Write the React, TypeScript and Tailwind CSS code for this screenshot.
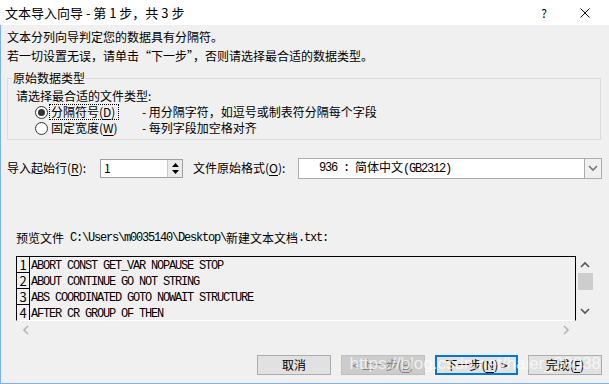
import { ReactNode } from 'react';

const cjk = 'font-["Noto_Sans_CJK_SC",sans-serif]';
const mono = 'font-["Liberation_Mono","Noto_Sans_CJK_SC",monospace] text-[12px] tracking-[-1.2px]';

const previewLines = [
  'ABORT CONST GET_VAR NOPAUSE STOP',
  'ABOUT CONTINUE GO NOT STRING',
  'ABS COORDINATED GOTO NOWAIT STRUCTURE',
  'AFTER CR GROUP OF THEN',
];

// petit helper pour les raccourcis soulignés, façon Windows
function Key({ k }: { k: string }) {
  return <span className="underline underline-offset-2">{k}</span>;
}

function Radio({ checked }: { checked?: boolean }) {
  return (
    <span className="w-[13px] h-[13px] rounded-full border border-[#333] bg-white flex items-center justify-center shrink-0">
      {checked && <span className="w-[7px] h-[7px] rounded-full bg-[#333]" />}
    </span>
  );
}

function Chevron({ dir, className }: { dir: 'up' | 'down' | 'left' | 'right'; className?: string }) {
  const d = {
    up: 'M1 6 L5 2 L9 6',
    down: 'M1 2 L5 6 L9 2',
    left: 'M6 1 L2 5 L6 9',
    right: 'M2 1 L6 5 L2 9',
  }[dir];
  const vertical = dir === 'up' || dir === 'down';
  return (
    <svg width={vertical ? 10 : 8} height={vertical ? 8 : 10} viewBox={vertical ? '0 0 10 8' : '0 0 8 10'} className={className}>
      <path d={d} fill="none" stroke="currentColor" strokeWidth="1.6" />
    </svg>
  );
}

function Button({ children, variant }: { children: ReactNode; variant?: 'focus' | 'disabled' }) {
  const base = 'w-[74px] h-[20px] flex items-center justify-center text-[12px]';
  if (variant === 'disabled')
    return <div className={`${base} w-[84px] bg-[#cccccc] border border-[#bfbfbf] text-[#838383]`}>{children}</div>;
  if (variant === 'focus')
    return <div className={`${base} w-[83px] bg-[#e1e1e1] border-2 border-[#0078d7] text-black`}>{children}</div>;
  return <div className={`${base} bg-[#e1e1e1] border border-[#adadad] text-black`}>{children}</div>;
}

export default function App() {
  return (
    <div className={`w-[609px] h-[384px] flex flex-col bg-[#f0f0f0] text-black text-[12px] leading-[16px] ${cjk} overflow-hidden`}>
      {/* BARRE DE TITRE */}
      <div className="h-[25px] bg-white flex items-center pl-[5px] shrink-0">
        <span className="text-[13px] text-black">文本导入向导 - 第 1 步，共 3 步</span>
        <div className="ml-auto flex items-center">
          <span className="w-[20px] text-center text-[12px]">?</span>
          <svg width="10" height="10" viewBox="0 0 10 10" className="ml-[26px] mr-[19px]">
            <path d="M0.5 0.5 L9.5 9.5 M9.5 0.5 L0.5 9.5" stroke="#111" strokeWidth="1" />
          </svg>
        </div>
      </div>

      {/* CORPS */}
      <div className="flex-1 flex flex-col border-l border-b border-[#7fb2ea] relative">
        <p className="mt-[4px] pl-[6px]">文本分列向导判定您的数据具有分隔符。</p>
        <p className="mt-[3px] pl-[6px]">若一切设置无误，请单击“下一步”，否则请选择最合适的数据类型。</p>

        <fieldset className="mt-[6px] ml-[6px] w-[594px] border border-[#dcdcdc] pl-[8px] pb-[3px]">
          <legend className="ml-[-4px] px-[1px]">原始数据类型</legend>
          <div className="mt-[2px]">请选择最合适的文件类型:</div>
          <div className="flex items-center h-[16px] pl-[19px]">
            <Radio checked />
            <span className="ml-[1px] px-[1px] border border-dotted border-black h-[16px] flex items-center w-[70px]">
              分隔符号(<Key k="D" />)
            </span>
            <span className="ml-[23px]">- 用分隔字符，如逗号或制表符分隔每个字段</span>
          </div>
          <div className="flex items-center h-[16px] pl-[19px]">
            <Radio />
            <span className="ml-[3px] w-[70px]">固定宽度(<Key k="W" />)</span>
            <span className="ml-[21px]">- 每列字段加空格对齐</span>
          </div>
        </fieldset>

        {/* LIGNE DE DÉPART + ENCODAGE */}
        <div className="mt-[18px] flex items-center h-[20px] pl-[6px]">
          <span className="w-[93px]">导入起始行(<Key k="R" />):</span>
          <div className="w-[83px] h-[19px] border border-[#a0a0a0] bg-white flex items-center">
            <span className="pl-[3px] flex-1">1</span>
            <div className="w-[15px] h-full border-l border-[#c8c8c8] bg-[#eaeaea] flex flex-col items-center justify-center gap-[3px]">
              <svg width="7" height="4" viewBox="0 0 7 4"><path d="M0 4 L3.5 0 L7 4 Z" fill="#000" /></svg>
              <svg width="7" height="4" viewBox="0 0 7 4"><path d="M0 0 L3.5 4 L7 0 Z" fill="#000" /></svg>
            </div>
          </div>
          <span className="ml-[10px] w-[105px]">文件原始格式(<Key k="O" />):</span>
          <div className="w-[304px] h-[21px] border border-[#adadad] bg-white flex items-center">
            <span className="pl-[20px] flex items-center gap-[6px]">
              <span className={mono}>936 :</span>
              <span>简体中文<span className={mono}>(GB2312)</span></span>
            </span>
            <div className="ml-auto w-[17px] h-full border-l border-[#adadad] bg-[#f0f0f0] flex items-center justify-center text-[#777]">
              <Chevron dir="down" />
            </div>
          </div>
        </div>

        {/* APERÇU */}
        <div className="mt-[52px] pl-[15px] flex items-center h-[16px]">
          <span>预览文件</span>
          <span className={`${mono} ml-[6px]`}>C:\Users\m0035140\Desktop\</span>
          <span>新建文本文档</span>
          <span className={mono}>.txt:</span>
        </div>

        <div className="mt-[10px] ml-[15px] flex">
          <div className="flex flex-col">
            <div className="w-[560px] h-[65px] border-t border-l border-r border-black border-b border-b-white overflow-hidden">
              {previewLines.map((line, i) => (
                <div key={i} className="flex items-end h-[16px]">
                  <div className="w-[13px] h-full border-r border-b border-black flex items-end justify-center text-[13px] leading-[14px]">
                    {i + 1}
                  </div>
                  <span className={`${mono} pl-[1px] leading-[14px]`}>{line}</span>
                </div>
              ))}
            </div>
            <div className="h-[17px] flex items-center justify-between px-[6px] text-[#b4b4b4]">
              <Chevron dir="left" />
              <Chevron dir="right" />
            </div>
          </div>
          <div className="ml-[1px] w-[16px] h-[65px] flex flex-col items-center text-[#555]">
            <Chevron dir="up" className="mt-[5px]" />
            <div className="mt-[4px] w-[15px] h-[17px] bg-[#cdcdcd]" />
            <Chevron dir="down" className="mt-auto mb-[6px]" />
          </div>
        </div>

        {/* BOUTONS */}
        <div className="mt-auto mb-[8px] flex items-center justify-end pr-[7px] gap-[10px]">
          <Button>取消</Button>
          <Button variant="disabled">&lt; 上一步(<Key k="B" />)</Button>
          <Button variant="focus">下一步(<Key k="N" />) &gt;</Button>
          <Button>完成(<Key k="F" />)</Button>
        </div>

        {/* filigrane du blog */}
        <span className="absolute right-[8px] bottom-[9px] text-[17px] leading-[20px] text-white/70 font-['Liberation_Sans',sans-serif] pointer-events-none">
          https://blog.csdn.net/haier_38038
        </span>
      </div>
    </div>
  );
}
